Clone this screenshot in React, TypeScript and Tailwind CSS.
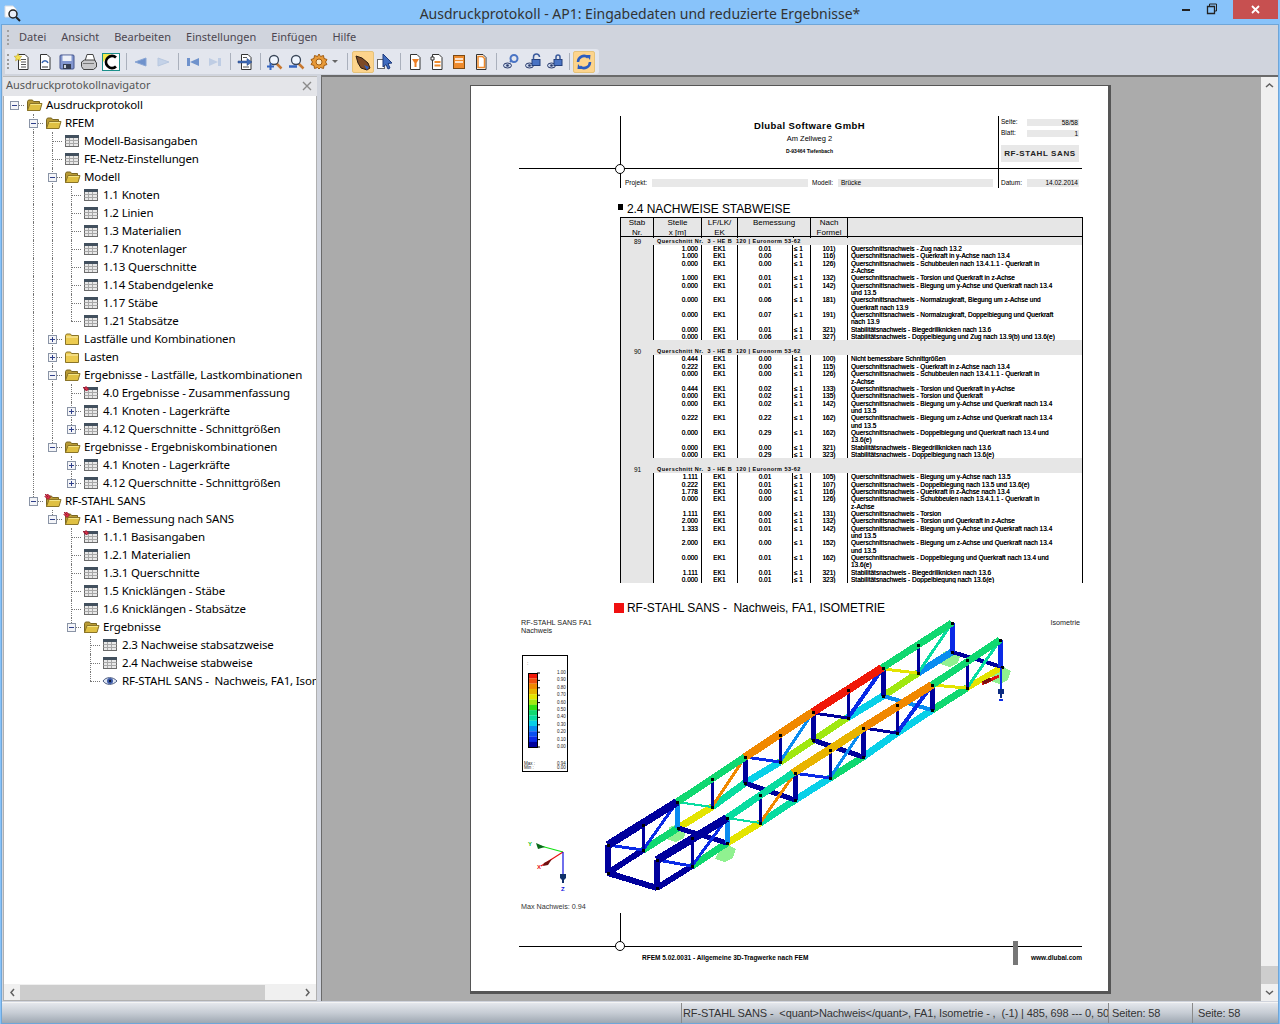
import React from 'react';

type Node = { label: string; icon: string; open?: boolean; kids?: Node[]; plus?: boolean };

const table = (label: string, plus = false): Node => ({ label, icon: 'table', plus });
const pinned = (label: string): Node => ({ label, icon: 'pintable' });

const tree: Node = {
  label: 'Ausdruckprotokoll', icon: 'folder', open: true, kids: [
    {
      label: 'RFEM', icon: 'folder', open: true, kids: [
        table('Modell-Basisangaben'),
        table('FE-Netz-Einstellungen'),
        {
          label: 'Modell', icon: 'folder', open: true, kids: [
            table('1.1 Knoten'), table('1.2 Linien'), table('1.3 Materialien'), table('1.7 Knotenlager'),
            table('1.13 Querschnitte'), table('1.14 Stabendgelenke'), table('1.17 Stäbe'), table('1.21 Stabsätze'),
          ],
        },
        { label: 'Lastfälle und Kombinationen', icon: 'closed', plus: true },
        { label: 'Lasten', icon: 'closed', plus: true },
        {
          label: 'Ergebnisse - Lastfälle, Lastkombinationen', icon: 'folder', open: true, kids: [
            pinned('4.0 Ergebnisse - Zusammenfassung'),
            table('4.1 Knoten - Lagerkräfte', true),
            table('4.12 Querschnitte - Schnittgrößen', true),
          ],
        },
        {
          label: 'Ergebnisse - Ergebniskombinationen', icon: 'folder', open: true, kids: [
            table('4.1 Knoten - Lagerkräfte', true),
            table('4.12 Querschnitte - Schnittgrößen', true),
          ],
        },
      ],
    },
    {
      label: 'RF-STAHL SANS', icon: 'pinfolder', open: true, kids: [
        {
          label: 'FA1 - Bemessung nach SANS', icon: 'pinfolder', open: true, kids: [
            pinned('1.1.1 Basisangaben'),
            table('1.2.1 Materialien'),
            table('1.3.1 Querschnitte'),
            table('1.5 Knicklängen - Stäbe'),
            table('1.6 Knicklängen - Stabsätze'),
            {
              label: 'Ergebnisse', icon: 'folder', open: true, kids: [
                table('2.3 Nachweise stabsatzweise'),
                table('2.4 Nachweise stabweise'),
                { label: 'RF-STAHL SANS -  Nachweis, FA1, Isometrie', icon: 'eye' },
              ],
            },
          ],
        },
      ],
    },
  ],
};

type Flat = { node: Node; guides: boolean[]; last: boolean; level: number };

const flatten = (node: Node, guides: boolean[], last: boolean, level: number, out: Flat[]) => {
  out.push({ node, guides, last, level });
  const kids = node.kids || [];
  kids.forEach((kid, i) => {
    flatten(kid, level === 0 ? [false] : [...guides, !last], i === kids.length - 1, level + 1, out);
  });
  return out;
};

const rows = flatten(tree, [], true, 0, []);

const TreeIcon = ({ kind }: { kind: string }) => {
  if (kind === 'table' || kind === 'pintable') {
    return (
      <svg width="16" height="14" viewBox="0 0 16 14" className="shrink-0">
        <rect x="1.5" y="1.5" width="13" height="11" fill="#e8e8e8" stroke="#6b6b6b" />
        <rect x="1" y="1" width="14" height="3" fill="#42505e" />
        <path d="M1.5 6.5h13M1.5 9.5h13M5.5 4v8M9.5 4v8" stroke="#a8a8a8" />
        {kind === 'pintable' && <path d="M0 1l3 3M3 0.5l2.5 2.5-2 2-2.5-2.5z" fill="#d8314a" stroke="#a01830" />}
      </svg>
    );
  }
  if (kind === 'eye') {
    return (
      <svg width="16" height="14" viewBox="0 0 16 14" className="shrink-0">
        <path d="M1 7c3-4.500 10-4.500 14 0-4 4.500-11 4.500-14 0z" fill="#dfe6f2" stroke="#4a5a80" />
        <circle cx="8" cy="7" r="3" fill="#3c5aa8" />
        <circle cx="8" cy="7" r="1.200" fill="#101830" />
      </svg>
    );
  }
  if (kind === 'closed') {
    return (
      <svg width="16" height="14" viewBox="0 0 16 14" className="shrink-0">
        <path d="M1.500 3.500l1-1.500h4l1 1.500h7v9h-13z" fill="#eccb50" stroke="#8a7428" />
        <path d="M2 5h12" stroke="#fbeeb0" />
      </svg>
    );
  }
  return (
    <svg width="18" height="14" viewBox="0 0 18 14" className="shrink-0">
      <path d="M2.500 12.500v-9l1-1.500h4l1 1.500h6v9z" fill="#b89a34" stroke="#7a6620" />
      <path d="M2.500 12.500l2.500-7h12l-2 7z" fill="#dfc043" stroke="#8a7428" />
      <path d="M5.500 6.500h10.500" stroke="#f4e486" />
      {kind === 'pinfolder' && <path d="M1 0l3 3M3.500 0l3 3-2.500 2.500-3-3z" fill="#d8314a" stroke="#a01830" />}
    </svg>
  );
};

const TreeRow = ({ row }: { row: Flat }) => {
  const { node, guides, last, level } = row;
  const hasBox = node.open || node.plus;
  return (
    <div className="flex h-[18px] items-center whitespace-pre">
      {guides.map((on, i) => (
        <div key={i} className="relative h-[18px] w-[19px] shrink-0">
          {on && <div className="absolute left-[9px] top-0 h-[18px] border-l border-dotted border-[#777]" />}
        </div>
      ))}
      <div className="relative h-[18px] w-[19px] shrink-0">
        {level > 0 && <div className={`absolute left-[9px] top-0 border-l border-dotted border-[#777] ${last ? 'h-[9px]' : 'h-[18px]'}`} />}
        <div className="absolute left-[9px] top-[9px] w-[10px] border-t border-dotted border-[#777]" />
        {hasBox && (
          <div className="absolute left-[5px] top-[5px] flex h-[9px] w-[9px] items-center justify-center border border-[#8a94a6] bg-[#f4f5f8]">
            <div className="h-px w-[5px] bg-[#30408a]" />
            {node.plus && <div className="absolute h-[5px] w-px bg-[#30408a]" />}
          </div>
        )}
      </div>
      <div className="-ml-[1px] flex w-[22px] shrink-0 justify-center">
        <TreeIcon kind={node.icon} />
      </div>
      <span className="ml-[1px]">{node.label}</span>
    </div>
  );
};

/* toolbar icons */
const Svg = ({ children }: { children: React.ReactNode }) => (
  <svg width="18" height="18" viewBox="0 0 18 18">{children}</svg>
);
const Sheet = () => <path d="M4.500 1.500h6.500l3 3v12h-9.500z" fill="#fff" stroke="#333" />;
const Glass = ({ mark }: { mark?: React.ReactNode }) => (
  <>
    <path d="M10 10l5.500 5.500" stroke="#c87830" strokeWidth="2.500" />
    <circle cx="8" cy="7" r="4.500" fill="#f0f6ff" stroke="#3a4658" strokeWidth="1.300" />
    {mark}
  </>
);
const Lock = ({ open }: { open?: boolean }) => (
  <>
    <ellipse cx="5.500" cy="12.500" rx="4" ry="2.500" fill="#c8d4ea" stroke="#2a3a6a" />
    <circle cx="5.500" cy="12.500" r="1.300" fill="#2a3a6a" />
    <rect x="8" y="6.500" width="8" height="6" fill="#4a74c4" stroke="#24407c" />
    <path d={open ? 'M9.500 6.500v-2.500a3 3 0 0 1 6 0' : 'M10 6.500v-2.500a2 2 0 0 1 4 0v2.500'} fill="none" stroke="#3a5a9c" strokeWidth="1.500" />
  </>
);

const toolIcons: Record<string, React.ReactNode> = {
  new: <Svg><Sheet /><path d="M7 6.500h5M7 9h5M7 11.500h5M7 14h5" stroke="#555" /><path d="M4 0.500l1.200 2.500 2.700.3-2 1.800.6 2.700-2.500-1.400-2.500 1.400.6-2.700-2-1.800 2.700-.3z" fill="#f6e050" stroke="#b09a20" strokeWidth="0.500" /></Svg>,
  open: <Svg><Sheet /><path d="M6 10c1-3 5-3 6 0" fill="none" stroke="#3a66b0" strokeWidth="1.500" /><path d="M6 14h6" stroke="#333" /></Svg>,
  save: <Svg><rect x="2" y="2" width="14" height="14" rx="1" fill="#8296cf" stroke="#45558c" /><rect x="4.500" y="2.500" width="9" height="5.500" fill="#eef1f8" /><rect x="5" y="11" width="8" height="5" fill="#343c50" /><rect x="6" y="12" width="2" height="3" fill="#cdd3e0" /></Svg>,
  print: <Svg><path d="M5 8l2-6.500h6l2 6.500" fill="#fff" stroke="#444" /><path d="M1.500 9l3-2h10l2 3v4l-3 2.500h-10l-2-3z" fill="#c8c8ca" stroke="#444" /><path d="M3 10.500h11" stroke="#777" /></Svg>,
  cycle: <Svg><rect x="0.500" y="0.500" width="17" height="17" fill="#fff" stroke="#1b8f8a" /><path d="M1 1h8l-8 8z" fill="#f3e94a" /><path d="M14 4.500a6 6 0 1 0 0 9" fill="none" stroke="#000" strokeWidth="2.800" /></Svg>,
  left: <Svg><path d="M3 9l11-4v8z" fill="#6f92cc" stroke="#8aa6d4" /></Svg>,
  right: <Svg><path d="M15 9l-11-4v8z" fill="#c4d2e8" stroke="#b8c8e0" /></Svg>,
  first: <Svg><path d="M3 5h3v8h-3z" fill="#6f92cc" /><path d="M6 9l9-4v8z" fill="#6f92cc" /></Svg>,
  last: <Svg><path d="M12 5h3v8h-3z" fill="#bfcde4" /><path d="M12 9l-9-4v8z" fill="#bfcde4" /></Svg>,
  export: <Svg><Sheet /><path d="M6 14h6M6 4.500h4" stroke="#555" /><path d="M1 8h9v-2.500l5 3.500-5 3.500v-2.500h-9z" fill="#3f6cb8" stroke="#24407c" strokeWidth="0.500" /></Svg>,
  zoomin: <Svg><Glass mark={<path d="M1 13.500h7M4.500 10v7" stroke="#3464c0" strokeWidth="2" />} /></Svg>,
  zoomout: <Svg><Glass mark={<path d="M1 13.500h8" stroke="#3464c0" strokeWidth="2.500" />} /></Svg>,
  gear: <Svg><path d="M9 1l1.500 2.500 3-1 .5 3 3 1-1.500 2.500 1.500 2.500-3 1-.5 3-3-1-1.500 1.500-1.500-1.500-3 1-.5-3-3-1 1.500-2.500-1.500-2.500 3-1 .5-3 3 1z" fill="#e89a38" stroke="#a05c14" /><circle cx="9" cy="9" r="3" fill="#fbe9c8" stroke="#a05c14" /></Svg>,
  hand: <Svg><path d="M2 3l6 2 6 5 2 5-3 2-6-2-3-5z" fill="#7c4a26" stroke="#2a1a10" /><path d="M10 12l5 2-2 3z" fill="#2a5cc0" /></Svg>,
  pointer: <Svg><rect x="1.500" y="6.500" width="7" height="9" fill="#fff" stroke="#666" /><path d="M7 1l9 9-4 .5 2 4.500-2 1-2-4.500-3 2.500z" fill="#3f6cc0" stroke="#1e3a7c" /></Svg>,
  funnel: <Svg><Sheet /><path d="M6 6h7l-2.500 4v4h-2v-4z" fill="#ee7f24" /></Svg>,
  lines: <Svg><Sheet /><path d="M3 4h3v3h-3z" fill="#fff" stroke="#333" /><path d="M6.500 8h6v2h-6zM6.500 11.500h6v2h-6z" fill="#ee8a2c" /></Svg>,
  filled: <Svg><rect x="3.500" y="2.500" width="11" height="13" fill="#ee8a2c" stroke="#7c4a14" /><path d="M5 6h8M5 9h8" stroke="#fff" strokeWidth="1.500" /></Svg>,
  outline: <Svg><Sheet /><path d="M6 3.500h4.500l2 2v9h-6.500z" fill="#fff" stroke="#ee8a2c" strokeWidth="1.500" /></Svg>,
  chain: <Svg><ellipse cx="5.500" cy="12.500" rx="4" ry="2.500" fill="#c8d4ea" stroke="#2a3a6a" /><circle cx="5.500" cy="12.500" r="1.300" fill="#2a3a6a" /><circle cx="12" cy="5.500" r="3.500" fill="none" stroke="#4a74c4" strokeWidth="2" /><path d="M8 9l2-2" stroke="#4a74c4" strokeWidth="2" /></Svg>,
  lockopen: <Svg><Lock open /></Svg>,
  lock: <Svg><Lock /></Svg>,
  sync: <Svg><path d="M3 9a6 6 0 0 1 10-4.500" fill="none" stroke="#2a5cc0" strokeWidth="2.500" /><path d="M15 9a6 6 0 0 1-10 4.500" fill="none" stroke="#2a5cc0" strokeWidth="2.500" /><path d="M11 2l4.500 0-.5 5zM7 16l-4.500 0 .5-5z" fill="#2a5cc0" /></Svg>,
};

const toolbarItems: string[] = [
  'new', 'open', 'save', 'print', 'cycle', '|8', 'left', 'right', '|8', 'first', 'last', '|9', 'export', '|7',
  'zoomin', 'zoomout', 'gear', 'caret', '|9', '*hand', 'pointer', '|8', 'funnel', 'lines', 'filled', 'outline', '|8',
  'chain', 'lockopen', 'lock', '|7', '*sync',
];

const sepWidth: Record<string, string> = { '|7': 'w-[7px]', '|8': 'w-[8px]', '|9': 'w-[9px]' };

const Toolbar = () => (
  <div className="ml-[3px] flex h-[25px] w-[594px] items-center rounded-r-[3px] bg-[#e3e6ee] pl-[2px]">
    <div className="mr-[3px] h-[15px] w-[2px] border-l-2 border-dotted border-[#9a9a9a]" />
    {toolbarItems.map((item, i) => {
      if (item[0] === '|') {
        return (
          <div key={i} className={`flex h-[17px] shrink-0 justify-center ${sepWidth[item]}`}>
            <div className="w-px bg-[#aab0bc]" />
          </div>
        );
      }
      if (item === 'caret') return <div key={i} className="ml-[2px] mr-[5px] h-0 w-0 border-x-[3px] border-t-[3px] border-x-transparent border-t-[#666]" />;
      const active = item[0] === '*';
      return (
        <div
          key={i}
          className={`flex h-[22px] w-[22px] shrink-0 items-center justify-center ${active ? 'rounded-[2px] border border-[#e5c27a] bg-[#fdd48c]' : ''}`}
        >
          {toolIcons[active ? item.slice(1) : item]}
        </div>
      );
    })}
  </div>
);

/* report table */
type TRow = [string, string, string, string, string?];
type Group = { stab: string; band: string; rows: TRow[] };

const Q = 'Querschnittsnachweis - ';
const S = 'Stabilitätsnachweis - ';
const groups: Group[] = [
  {
    stab: '89', band: 'h-[8px]', rows: [
      ['1.000', '0.01', '101)', Q + 'Zug nach 13.2'],
      ['1.000', '0.00', '116)', Q + 'Querkraft in y-Achse nach 13.4'],
      ['0.000', '0.00', '126)', Q + 'Schubbeulen nach 13.4.1.1 - Querkraft in', 'z-Achse'],
      ['1.000', '0.01', '132)', Q + 'Torsion und Querkraft in z-Achse'],
      ['0.000', '0.01', '142)', Q + 'Biegung um y-Achse und Querkraft nach 13.4', 'und 13.5'],
      ['0.000', '0.06', '181)', Q + 'Normalzugkraft, Biegung um z-Achse und', 'Querkraft nach 13.9'],
      ['0.000', '0.07', '191)', Q + 'Normalzugkraft, Doppelbiegung und Querkraft', 'nach 13.9'],
      ['0.000', '0.01', '321)', S + 'Biegedrillknicken nach 13.6'],
      ['0.000', '0.06', '327)', S + 'Doppelbiegung und Zug nach 13.9(b) und 13.6(e)'],
    ],
  },
  {
    stab: '90', band: 'h-[15px]', rows: [
      ['0.444', '0.00', '100)', 'Nicht bemessbare Schnittgrößen'],
      ['0.222', '0.00', '115)', Q + 'Querkraft in z-Achse nach 13.4'],
      ['0.000', '0.00', '126)', Q + 'Schubbeulen nach 13.4.1.1 - Querkraft in', 'z-Achse'],
      ['0.444', '0.02', '133)', Q + 'Torsion und Querkraft in y-Achse'],
      ['0.000', '0.02', '135)', Q + 'Torsion und Querkraft'],
      ['0.000', '0.02', '142)', Q + 'Biegung um y-Achse und Querkraft nach 13.4', 'und 13.5'],
      ['0.222', '0.22', '162)', Q + 'Biegung um z-Achse und Querkraft nach 13.4', 'und 13.5'],
      ['0.000', '0.29', '162)', Q + 'Doppelbiegung und Querkraft nach 13.4 und', '13.6(e)'],
      ['0.000', '0.00', '321)', S + 'Biegedrillknicken nach 13.6'],
      ['0.000', '0.29', '323)', S + 'Doppelbiegung nach 13.6(e)'],
    ],
  },
  {
    stab: '91', band: 'h-[15px]', rows: [
      ['1.111', '0.01', '105)', Q + 'Biegung um y-Achse nach 13.5'],
      ['0.222', '0.01', '107)', Q + 'Doppelbiegung nach 13.5 und 13.6(e)'],
      ['1.778', '0.00', '116)', Q + 'Querkraft in z-Achse nach 13.4'],
      ['0.000', '0.00', '126)', Q + 'Schubbeulen nach 13.4.1.1 - Querkraft in', 'z-Achse'],
      ['1.111', '0.00', '131)', Q + 'Torsion'],
      ['2.000', '0.01', '132)', Q + 'Torsion und Querkraft in z-Achse'],
      ['1.333', '0.01', '142)', Q + 'Biegung um y-Achse und Querkraft nach 13.4', 'und 13.5'],
      ['2.000', '0.00', '152)', Q + 'Biegung um z-Achse und Querkraft nach 13.4', 'und 13.5'],
      ['0.000', '0.01', '162)', Q + 'Doppelbiegung und Querkraft nach 13.4 und', '13.6(e)'],
      ['1.111', '0.01', '321)', S + 'Biegedrillknicken nach 13.6'],
      ['0.000', '0.01', '323)', S + 'Doppelbiegung nach 13.6(e)'],
    ],
  },
];

const cols = 'grid grid-cols-[33px_48px_36px_55px_18px_37px_1fr]';

const ReportTable = () => (
  <div className="h-[366px] overflow-hidden border-x border-black">
    <div className={`${cols} h-[20px] border-y border-black bg-[#e6e6e6] text-center text-[8px] leading-[10px]`}>
      <div className="border-r border-black">Stab<br />Nr.</div>
      <div className="border-r border-black">Stelle<br />x [m]</div>
      <div className="border-r border-black">LF/LK/<br />EK</div>
      <div className="relative col-span-2 border-r border-black">
        Bemessung
        <div className="absolute bottom-0 left-[55px] h-[2px] w-px bg-black" />
      </div>
      <div className="border-r border-black">Nach<br />Formel</div>
      <div />
    </div>
    {groups.map((g) => (
      <div key={g.stab}>
        <div className={`${g.band} flex items-end bg-[#e6e6e6] text-[6.500px] leading-[7px]`}>
          <div className="w-[33px] shrink-0 text-center">{g.stab}</div>
          <div className="whitespace-pre pl-[3px] text-[5.500px] font-bold tracking-[0.45px]">Querschnitt Nr.  3 - HE B  120 | Euronorm 53-62</div>
        </div>
        {g.rows.map((r, i) => (
          <div key={i} className={`${cols} text-[6.500px] leading-[7.350px] [text-shadow:0_0_0.4px_#000]`}>
            <div className="border-r border-black bg-[#e6e6e6]" />
            <div className="border-r border-black pr-[3px] text-right">{r[0]}</div>
            <div className="border-r border-black text-center">EK1</div>
            <div className="border-r border-black text-center">{r[1]}</div>
            <div className="border-r border-black pl-[1px]">≤ 1</div>
            <div className="border-r border-black text-center">{r[2]}</div>
            <div className="whitespace-nowrap pl-[3px]">
              {r[3]}
              {r[4] && <><br />{r[4]}</>}
            </div>
          </div>
        ))}
      </div>
    ))}
  </div>
);

/* truss drawing, coordinates are page pixels */
const NAVY = '#00009c';
const BLUE = '#0a2ae6';
const SKY = '#0a8cf0';
const CYAN = '#08d0e8';
const TEAL = '#08dca0';
const GREEN = '#10d870';
const LIME = '#a0e810';
const YEL = '#e4e400';
const GOLD = '#e8b400';
const ORA = '#f08800';
const RED = '#f01808';

type Seg = [number, number, number, number, string, number];

const segs: Seg[] = [
  // lower chords first, they sit behind
  [608, 873, 643, 850, NAVY, 6], [643, 850, 678, 828, GREEN, 7], [678, 828, 712, 807, YEL, 7], [712, 807, 745, 783, TEAL, 7],
  [745, 783, 780, 762, CYAN, 7], [780, 762, 847, 718, LIME, 7], [847, 718, 883, 696, CYAN, 7], [883, 696, 918, 673, LIME, 7], [918, 673, 952, 652, SKY, 7],
  [657, 888, 692, 866, NAVY, 6], [692, 866, 727, 843, GREEN, 7], [727, 843, 760, 823, YEL, 7], [760, 823, 795, 800, TEAL, 7],
  [795, 800, 830, 778, CYAN, 7], [830, 778, 863, 757, GREEN, 7], [863, 757, 897, 733, CYAN, 7], [897, 733, 932, 710, CYAN, 7], [932, 710, 967, 688, GREEN, 7], [967, 688, 1002, 667, YEL, 6],
  // bottom cross members
  [608, 873, 657, 888, NAVY, 6], [678, 828, 727, 843, NAVY, 5], [745, 783, 795, 800, NAVY, 5], [813, 740, 863, 757, NAVY, 5], [883, 696, 932, 710, SKY, 4], [952, 652, 1002, 667, NAVY, 4],
  // top cross members
  [608, 845, 643, 850, BLUE, 3], [657, 860, 692, 866, BLUE, 3], [677, 802, 712, 807, TEAL, 2], [727, 818, 760, 823, TEAL, 2],
  [745, 757, 780, 762, BLUE, 3], [793, 773, 830, 778, BLUE, 3], [813, 713, 848, 718, NAVY, 3], [863, 728, 897, 733, NAVY, 3],
  [883, 669, 918, 673, YEL, 3], [932, 685, 967, 688, YEL, 3],
  // diagonals
  [643, 850, 677, 802, BLUE, 3], [692, 866, 727, 818, BLUE, 3], [712, 807, 745, 757, ORA, 3], [760, 823, 795, 773, ORA, 3],
  [780, 762, 813, 712, SKY, 3], [830, 778, 863, 728, SKY, 3], [848, 718, 883, 668, BLUE, 4], [897, 733, 932, 685, BLUE, 4],
  [918, 673, 952, 623, TEAL, 3], [967, 688, 1000, 640, TEAL, 3],
  // verticals
  [608, 845, 608, 873, NAVY, 6], [643, 825, 643, 850, NAVY, 3], [677, 802, 677, 828, SKY, 5], [712, 779, 712, 807, NAVY, 3],
  [745, 757, 745, 783, NAVY, 5], [780, 735, 780, 762, NAVY, 3], [813, 712, 813, 740, NAVY, 5], [848, 690, 848, 718, NAVY, 3],
  [883, 668, 883, 696, NAVY, 5], [918, 645, 918, 673, NAVY, 3], [952, 623, 952, 652, BLUE, 5],
  [657, 860, 657, 888, NAVY, 6], [692, 838, 692, 866, NAVY, 3], [727, 818, 727, 843, SKY, 5], [760, 795, 760, 823, NAVY, 3],
  [795, 773, 795, 800, NAVY, 5], [830, 750, 830, 778, NAVY, 3], [863, 728, 863, 757, NAVY, 5], [897, 705, 897, 733, NAVY, 3],
  [932, 685, 932, 710, NAVY, 5], [967, 660, 967, 688, NAVY, 3], [1000, 640, 1000, 667, BLUE, 5],
  // upper chords
  [608, 845, 677, 802, NAVY, 8], [677, 802, 745, 757, GREEN, 7], [745, 757, 813, 712, ORA, 8], [813, 712, 882, 668, RED, 8], [882, 668, 952, 623, GREEN, 7],
  [657, 860, 727, 818, NAVY, 8], [727, 818, 793, 773, TEAL, 7], [793, 773, 863, 728, GOLD, 8], [863, 728, 932, 685, ORA, 8], [932, 685, 1000, 640, GREEN, 7],
];

const nodes: [number, number][] = [
  [608, 845], [608, 873], [657, 860], [657, 888], [643, 825], [643, 850], [692, 838], [692, 866], [677, 802], [678, 828],
  [727, 818], [727, 843], [712, 779], [712, 807], [760, 795], [760, 823], [745, 757], [745, 783], [780, 735], [780, 762],
  [795, 773], [795, 800], [813, 712], [813, 740], [830, 750], [830, 778], [848, 690], [848, 718], [863, 728], [863, 757],
  [883, 668], [883, 696], [897, 705], [897, 733], [918, 645], [918, 673], [932, 685], [932, 710], [952, 623], [952, 652],
  [967, 660], [967, 688], [1000, 640], [1002, 667],
];

const supports: [number, number][] = [[678, 830], [727, 850], [952, 655], [1002, 672]];

const legendColors = [
  '#f01808', '#f05010', '#f08800', '#e8b400', '#e4e400', '#a0e810', '#30e010', '#10d870', '#08dca0', '#08d0e8',
  '#0a8cf0', '#0a50f0', '#0a2ae6', '#00009c',
];
const legendValues = ['1.00', '0.90', '0.80', '0.70', '0.60', '0.50', '0.40', '0.30', '0.20', '0.10', '0.00'];

const Figure = () => (
  <svg width="563" height="296" viewBox="519 618 563 296" className="block">
    <text x="521" y="625" fontSize="7.200" fill="#222">RF-STAHL SANS FA1</text>
    <text x="521" y="633" fontSize="7.200" fill="#222">Nachweis</text>
    <text x="1080" y="625" fontSize="7.200" fill="#222" textAnchor="end">Isometrie</text>

    <rect x="522.500" y="655.500" width="45" height="116" fill="#fff" stroke="#000" />
    <text x="527" y="665" fontSize="5" fill="#222">:</text>
    {legendColors.map((c, i) => (
      <rect key={c} x="528" y={673 + i * 5.3} width="9" height="5.400" fill={c} />
    ))}
    <rect x="528.500" y="673.500" width="9" height="74" fill="none" stroke="#000" />
    {legendValues.map((v, i) => (
      <g key={v}>
        <path d={`M537 ${673 + i * 7.4}h3`} stroke="#000" />
        <text x="557" y={674 + i * 7.4} fontSize="4.500" fill="#222">{v}</text>
      </g>
    ))}
    <text x="524" y="765" fontSize="4.500" fill="#222">Max :</text>
    <text x="557" y="765" fontSize="4.500" fill="#222">0.94</text>
    <text x="524" y="769" fontSize="4.500" fill="#222">Min :</text>
    <text x="557" y="769" fontSize="4.500" fill="#222">0.00</text>

    <g shapeRendering="crispEdges">
      {supports.map(([x, y]) => (
        <path key={x} d={`M${x - 9} ${y - 3}l9 -3 9 5-3 9-8 4-10-3 3-6z`} fill="#7cee7c" opacity="0.85" />
      ))}
      {segs.map((s, i) => (
        <line key={i} x1={s[0]} y1={s[1]} x2={s[2]} y2={s[3]} stroke={s[4]} strokeWidth={s[5]} />
      ))}
      {nodes.map(([x, y]) => (
        <rect key={`${x}-${y}`} x={x - 1.500} y={y - 1.500} width="3" height="3" fill="#000" />
      ))}
      <path d="M999 676l-17 8" stroke="#e01010" strokeWidth="3" />
      <path d="M991 679l-8 4" stroke="#7a1010" strokeWidth="4" />
      <path d="M1001 668v28" stroke="#0a2ae6" strokeWidth="2" />
      <path d="M998 689h6v5h-2v4h-2v-4h-2z" fill="#0a2a80" />
    </g>
    <rect x="999" y="699" width="4" height="2" fill="#0a2ae6" />

    <g>
      <path d="M563 852l-26-7" stroke="#10e010" strokeWidth="1.200" />
      <path d="M545 847l-9-4 2 6z" fill="#0a6a1a" />
      <path d="M563 852l-22 14" stroke="#e81010" strokeWidth="1.200" />
      <path d="M552 859l-8 4-1 3 5-1z" fill="#701010" />
      <path d="M563 852v30" stroke="#1010e0" strokeWidth="1.200" />
      <path d="M560 874h6v4l-2 2v3h-2v-3l-2-2z" fill="#10306a" />
      <text x="528" y="846" fontSize="6" fontWeight="700" fill="#10c010">Y</text>
      <text x="537" y="869" fontSize="6" fontWeight="700" fill="#e81010">X</text>
      <text x="561" y="891" fontSize="6" fontWeight="700" fill="#1010e0">Z</text>
    </g>

    <text x="521" y="909" fontSize="7.200" fill="#333">Max Nachweis: 0.94</text>
  </svg>
);

const Circle = ({ top }: { top: string }) => (
  <div className={`absolute left-[96px] ${top} h-[10px] w-[10px] rounded-full border border-black bg-white`} />
);

const Report = () => (
  <div className="h-[909px] w-[641px] shrink-0 border-y border-l border-b-[3px] border-r-[3px] border-[#555] bg-white pl-[48px] pr-[26px] pt-[30px] font-['Liberation_Sans',sans-serif] text-black">
    <div className="relative w-[563px]">
      <div className="grid h-[72px] grid-cols-[101px_378px_84px] grid-rows-[53px_19px]">
        <div className="border-b border-black" />
        <div className="flex flex-col items-center border-b border-l border-black pt-[4px]">
          <div className="text-[9.500px] font-bold leading-[12px] tracking-[0.4px]">Dlubal Software GmbH</div>
          <div className="mt-[2px] text-[7.500px] leading-[10px]">Am Zellweg 2</div>
          <div className="mt-[3px] text-[5px] font-bold leading-[8px]">D-93464 Tiefenbach</div>
        </div>
        <div className="border-b border-l border-black pl-[2px] pt-[3px] text-[6.500px]">
          <div className="flex h-[7px] items-center justify-between pr-[3px] leading-none">
            <span>Seite:</span>
            <span className="w-[52px] bg-[#e8e8e8] pr-[1px] text-right leading-[7px]">58/58</span>
          </div>
          <div className="mt-[4px] flex h-[7px] items-center justify-between pr-[3px] leading-none">
            <span>Blatt:</span>
            <span className="w-[52px] bg-[#e8e8e8] pr-[1px] text-right leading-[7px]">1</span>
          </div>
          <div className="mr-[3px] mt-[8px] h-[17px] bg-[#e8e8e8] text-center text-[8px] font-bold leading-[17px] tracking-[0.6px] text-[#222]">RF-STAHL SANS</div>
        </div>
        <div />
        <div className="flex items-start gap-[3px] border-l border-black pl-[4px] pt-[10px] text-[6.500px] leading-[8px]">
          <span className="w-[24px]">Projekt:</span>
          <div className="h-[8px] w-[156px] bg-[#e8e8e8]" />
          <span className="ml-[1px] w-[23px]">Modell:</span>
          <div className="h-[8px] w-[155px] bg-[#e8e8e8] pl-[3px]">Brücke</div>
        </div>
        <div className="flex items-start justify-between border-l border-black pl-[2px] pr-[3px] pt-[10px] text-[6.500px] leading-[8px]">
          <span>Datum:</span>
          <span className="w-[52px] bg-[#e8e8e8] pr-[1px] text-right">14.02.2014</span>
        </div>
      </div>
      <Circle top="top-[48px]" />

      <div className="ml-[99px] flex h-[29px] items-end pb-[1px]">
        <div className="mb-[6px] mr-[4px] h-[6px] w-[5px] bg-black" />
        <span className="text-[12px] leading-[14px] tracking-[-0.08px]">2.4 NACHWEISE STABWEISE</span>
      </div>
      <div className="ml-[101px] w-[463px]">
        <ReportTable />
      </div>

      <div className="ml-[95px] mt-[17px] flex h-[18px] items-start">
        <div className="mt-[3px] h-[10px] w-[10px] bg-[#f01010]" />
        <span className="ml-[3px] whitespace-pre text-[12px] leading-[16px] tracking-[-0.05px]">RF-STAHL SANS -  Nachweis, FA1, ISOMETRIE</span>
      </div>

      <Figure />

      <div className="relative mt-[-1px]">
        <div className="ml-[101px] h-[33px] border-l border-black" />
        <div className="flex h-[30px] items-start justify-between border-t border-black pl-[123px] pt-[6px] text-[6.500px] font-bold leading-[9px]">
          <span>RFEM 5.02.0031 - Allgemeine 3D-Tragwerke nach FEM</span>
          <div className="flex items-start">
            <div className="-mt-[12px] mr-[13px] h-[24px] w-[5px] bg-[#777]" />
            <span>www.dlubal.com</span>
          </div>
        </div>
        <Circle top="top-[28px]" />
      </div>
    </div>
  </div>
);

const Chevron = ({ d }: { d: string }) => (
  <svg width="9" height="9" viewBox="0 0 9 9"><path d={d} fill="none" stroke="#606060" strokeWidth="1.500" /></svg>
);

export default function App() {
  return (
    <div className="flex h-[1024px] w-[1280px] flex-col overflow-hidden bg-[#88c3fa] font-['Noto_Sans',sans-serif]">
      {/* Titelleiste */}
      <div className="relative flex h-[24px] shrink-0 items-center justify-center pt-[2px] text-[14px] text-[#333]">
        <svg width="20" height="18" viewBox="0 0 20 18" className="absolute left-[4px] top-[5px]">
          <path d="M1 1h8l3 3v8h-11z" fill="#fff" stroke="#d8dce4" />
          <circle cx="9" cy="9" r="4" fill="#e8eef8" stroke="#222" strokeWidth="1.500" />
          <path d="M12 12l4 4" stroke="#222" strokeWidth="2" />
        </svg>
        <span>Ausdruckprotokoll - AP1: Eingabedaten und reduzierte Ergebnisse*</span>
        <div className="absolute right-[2px] top-0 flex h-[19px] items-start">
          <div className="flex h-[19px] w-[25px] items-center justify-center"><div className="h-[2px] w-[8px] bg-[#222]" /></div>
          <svg width="26" height="19" viewBox="0 0 26 19"><path d="M9.500 6.500h7v7h-7z" fill="none" stroke="#222" strokeWidth="1.300" /><path d="M11.500 6v-2h7v7h-2" fill="none" stroke="#222" /></svg>
          <div className="ml-[9px] flex h-[19px] w-[45px] items-center justify-center bg-[#c75050]">
            <svg width="9" height="9" viewBox="0 0 9 9"><path d="M1 1l7 7M8 1l-7 7" stroke="#fff" strokeWidth="1.800" /></svg>
          </div>
        </div>
      </div>

      {/* Fensterinhalt */}
      <div className="mx-[1px] flex min-h-0 flex-1 flex-col border border-[#6fa6d8] bg-[#d0d4dd]">
        {/* Menü */}
        <div className="flex h-[24px] shrink-0 items-center text-[11px] text-[#4c4650]">
          <div className="ml-[5px] mr-[10px] h-[15px] w-[2px] border-l-2 border-dotted border-[#a0a0a0]" />
          {['Datei', 'Ansicht', 'Bearbeiten', 'Einstellungen', 'Einfügen', 'Hilfe'].map((m) => (
            <span key={m} className="mr-[15px]">{m}</span>
          ))}
        </div>
        <Toolbar />

        {/* Hauptbereich */}
        <div className="mt-[1px] flex min-h-0 flex-1">
          {/* Navigator */}
          <div className="ml-[1px] mt-[1px] flex w-[314px] shrink-0 flex-col">
            <div className="flex h-[20px] shrink-0 items-center justify-between border-t border-[#bbb] bg-[#e4e5e9] pb-[2px] pl-[3px] pr-[5px] text-[11px] text-[#555]">
              <span>Ausdruckprotokollnavigator</span>
              <svg width="10" height="10" viewBox="0 0 10 10"><path d="M1 1l8 8M9 1l-8 8" stroke="#8a8a8a" strokeWidth="1.400" /></svg>
            </div>
            <div className="min-h-0 flex-1 overflow-hidden border-x border-[#b0b0b0] bg-white pl-[1px] text-[11.500px] leading-[18px] tracking-[-0.15px] text-black">
              {rows.map((r, i) => <TreeRow key={i} row={r} />)}
            </div>
            <div className="flex h-[17px] shrink-0 items-center border border-t-0 border-[#b0b0b0] bg-[#f0f0f0]">
              <div className="flex w-[16px] justify-center"><Chevron d="M6 1l-3 3.500 3 3.500" /></div>
              <div className="h-[15px] w-[245px] bg-[#cdcdcd]" />
              <div className="flex-1" />
              <div className="flex w-[17px] justify-center"><Chevron d="M3 1l3 3.500-3 3.500" /></div>
            </div>
          </div>

          {/* Arbeitsbereich */}
          <div className="ml-[4px] flex min-w-0 flex-1 border-l border-t-2 border-[#6a6a6a] bg-[#ababab]">
            <div className="flex min-w-0 flex-1 justify-center pt-[8px]">
              <div className="ml-[-2px]"><Report /></div>
            </div>
            <div className="flex w-[17px] shrink-0 flex-col items-center bg-[#f0f0f0]">
              <div className="mt-[4px]"><Chevron d="M1 6l3.500-3 3.500 3" /></div>
              <div className="flex-1" />
              <div className="h-[18px] w-[17px] bg-[#cdcdcd]" />
              <div className="my-[4px]"><Chevron d="M1 3l3.500 3 3.500-3" /></div>
            </div>
          </div>
        </div>

        {/* Statusleiste */}
        <div className="mt-[1px] flex h-[21px] shrink-0 items-center border-t border-[#f4f4f4] bg-gradient-to-b from-[#e4e7ec] via-[#c6ccd4] to-[#9fa8b2] font-['Liberation_Sans',sans-serif] text-[11px] tracking-[-0.12px] text-[#333]">
          <div className="w-[679px] shrink-0" />
          <div className="flex h-full w-[427px] shrink-0 items-center overflow-hidden whitespace-pre border-l border-[#8a8a8a] pl-[1px]">
            {'RF-STAHL SANS -  <quant>Nachweis</quant>, FA1, Isometrie - ,  (-1) | 485, 698 --- 0, 505'}
          </div>
          <div className="flex h-full w-[84px] shrink-0 items-center border-l border-[#8a8a8a] pl-[3px]">Seiten: 58</div>
          <div className="flex h-full items-center border-l border-[#8a8a8a] pl-[5px]">Seite: 58</div>
        </div>
      </div>
    </div>
  );
}
